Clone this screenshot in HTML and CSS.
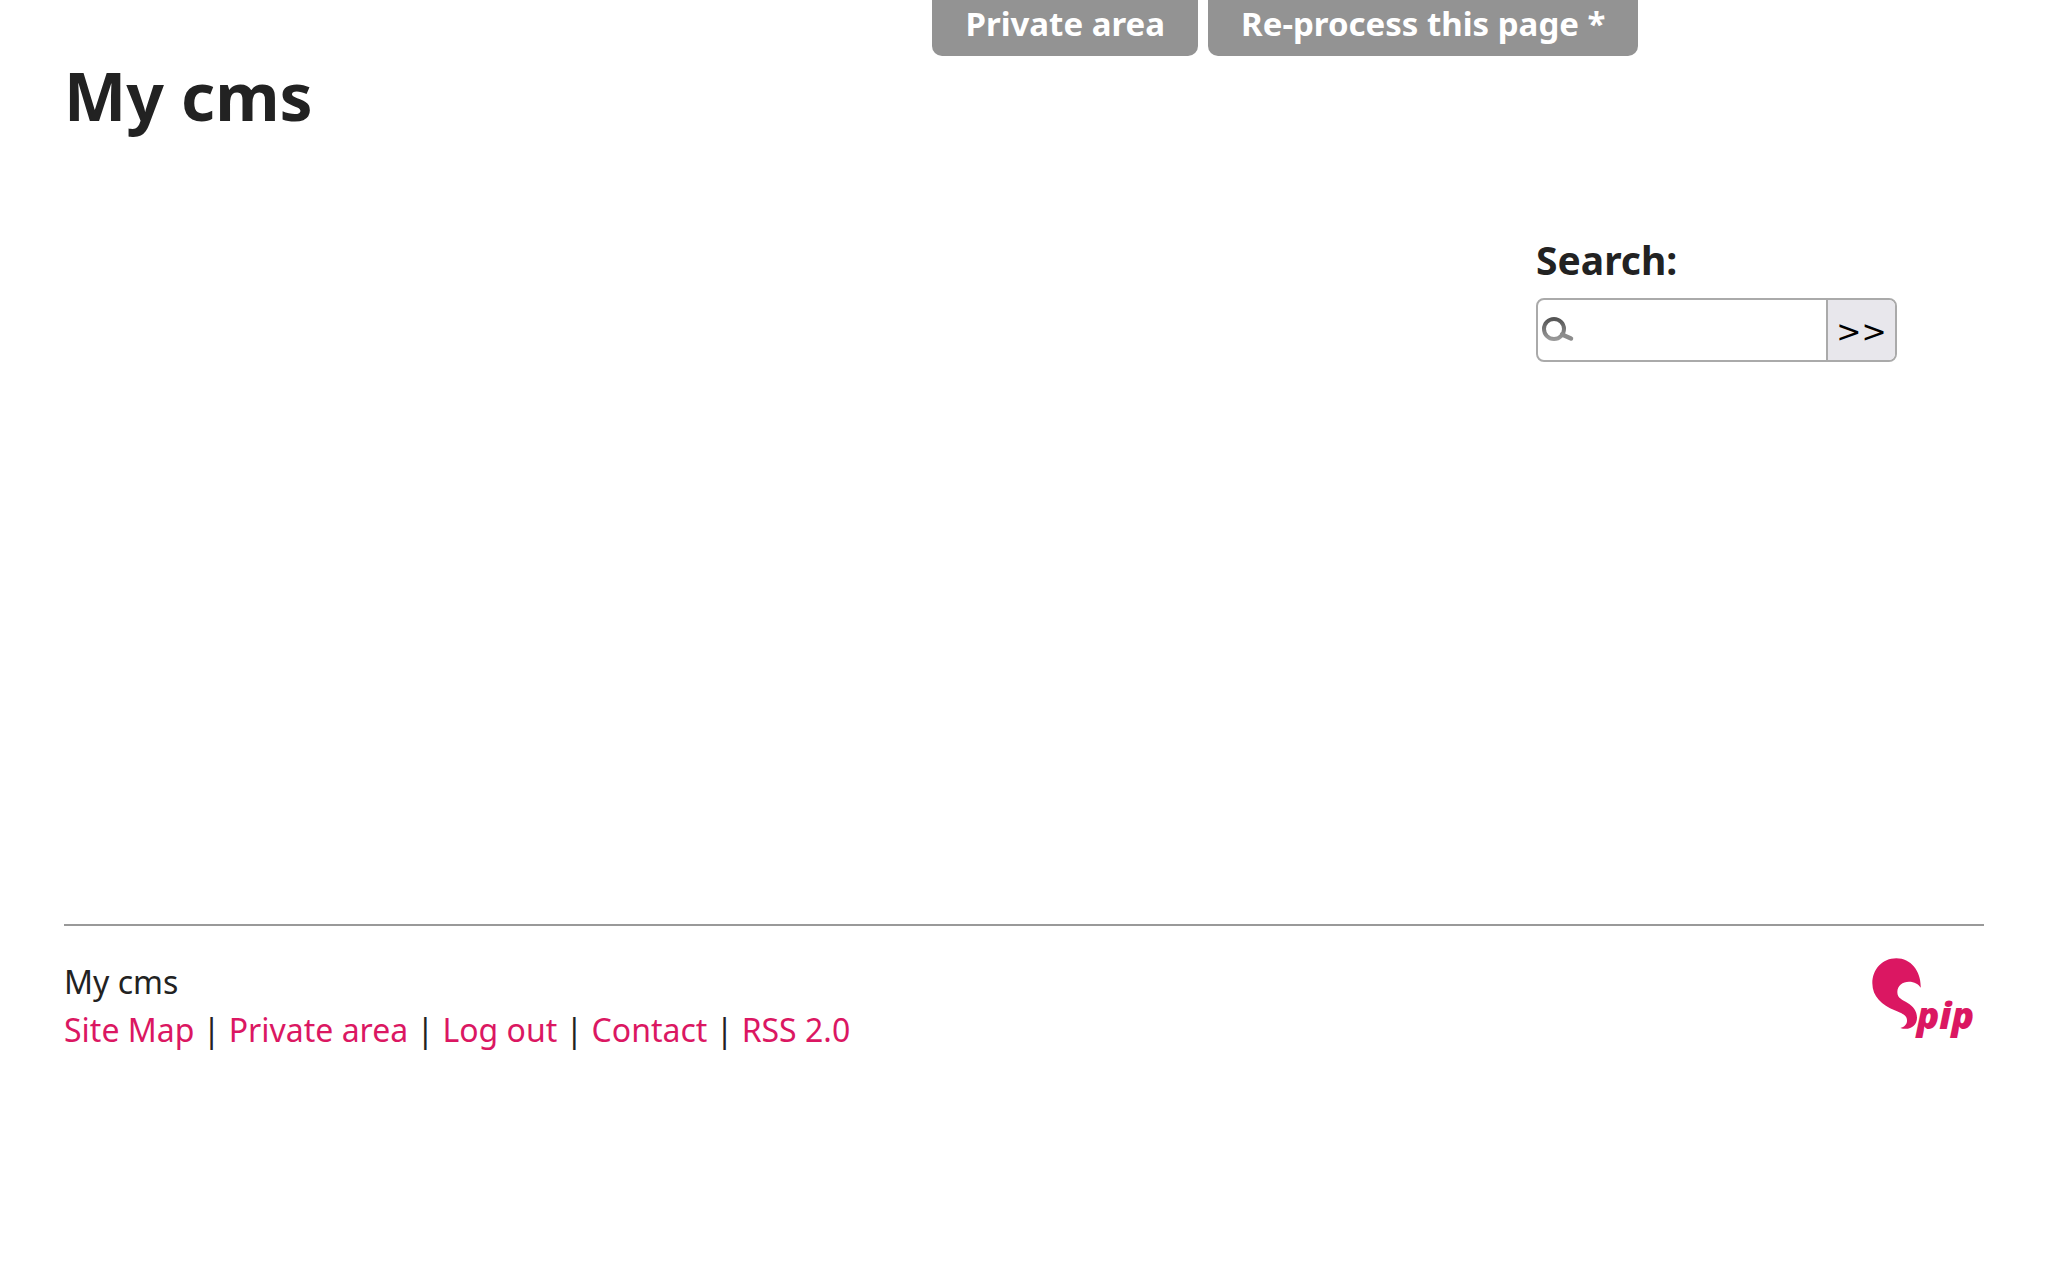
FILE: index.html
```
<!DOCTYPE html>
<html lang="en">
<head>
    <meta charset="UTF-8">
    <meta name="viewport" content="width=device-width, initial-scale=1.0">
    <title>My cms</title>
    <link rel="stylesheet" href="styles.css">
</head>
<body>
    <!-- Admin buttons, over the top of the page -->
    <div class="admin-buttons">
        <a href="#private">Private area</a>
        <a href="#recalcul">Re-process this page *</a>
    </div>

    <div class="page">
        <header class="header">
            <h1>My cms</h1>
        </header>

        <div class="main">
            <main class="content"></main>
            <aside class="aside">
                <form class="search-form">
                    <label for="search">Search:</label>
                    <div class="search-box">
                        <svg class="search-icon" viewBox="0 0 32 26" aria-hidden="true">
                            <defs>
                                <linearGradient id="lens" x1="0" y1="0" x2="0" y2="1">
                                    <stop offset="0" stop-color="#555"/>
                                    <stop offset="1" stop-color="#999"/>
                                </linearGradient>
                            </defs>
                            <circle cx="12" cy="12" r="10" fill="none" stroke="url(#lens)" stroke-width="4"/>
                            <path d="M20 17.500L29 21.500" fill="none" stroke="#8c8c8c" stroke-width="4.500" stroke-linecap="round"/>
                        </svg>
                        <input type="search" id="search" name="recherche">
                        <button type="submit">&gt;&gt;</button>
                    </div>
                </form>
            </aside>
        </div>

        <footer class="footer">
            <div class="colophon">
                <p>My cms</p>
                <p><a href="#plan">Site Map</a> | <a href="#private">Private area</a> | <a href="#logout">Log out</a> | <a href="#contact">Contact</a> | <a href="#rss">RSS 2.0</a></p>
            </div>
            <a class="generator" href="#spip" aria-label="SPIP">
                <svg viewBox="30 51 324 255">
                    <path d="M182 143C184 96 154 55 109 55C67 55 37 88 37 130C37 170 66 196 104 211C128 221 140 226 141 240C142 252 134 260 121 264C149 273 171 257 171 233C171 213 159 199 143 189C127 179 112 175 112 156C112 137 128 125 147 125C163 125 176 132 182 143Z"/>
                    <text x="170" y="268">pip</text>
                </svg>
            </a>
        </footer>
    </div>
</body>
</html>
```
FILE: styles.css
```
/* Base styles */
* {
    box-sizing: border-box;
}
body {
    margin: 0;
    background-color: #fff;
    color: #222;
    font-family: "Lucida Grande", "Noto Sans", sans-serif;
    font-size: 32px;
    line-height: 48px;
}
a {
    color: #db1762;
    text-decoration: none;
}
h1, p {
    margin: 0;
}
.page {
    padding: 48px 64px;
}

/* Admin buttons */
.admin-buttons {
    position: absolute;
    top: 0;
    right: 20%;
    display: flex;
    gap: 10px;
}
.admin-buttons a {
    padding: 0 33px 8px;
    border-radius: 0 0 10px 10px;
    background-color: #939393;
    color: #fff;
    font-size: 33px;
    font-weight: bold;
}

/* Header */
.header {
    min-height: 184px;
}
.header h1 {
    font-size: 66px;
    line-height: 94px;
}

/* Main */
.main {
    display: flex;
    min-height: 692px;
}
.content {
    flex: 1;
}
.aside {
    width: 448px;
}
.search-form label {
    display: block;
    margin-bottom: 10px;
    font-size: 39px;
    font-weight: bold;
    line-height: 56px;
}
.search-box {
    position: relative;
    display: flex;
    width: 361px;
    height: 64px;
    border: 2px solid #aaa;
    border-radius: 8px;
    overflow: hidden;
}
.search-box input {
    flex: 1;
    min-width: 0;
    padding: 0 8px 0 40px;
    border: 0;
    background: none;
    font: inherit;
    color: #222;
}
.search-box button {
    width: 69px;
    padding: 2px 0 0;
    border: 0;
    border-left: 2px solid #aaa;
    background-color: #e8e7ec;
    color: #000;
    font-family: "DejaVu Sans", sans-serif;
    font-size: 30px;
}
.search-icon {
    position: absolute;
    top: 17px;
    left: 4px;
    width: 32px;
    height: 26px;
}

/* Footer */
.footer {
    display: flex;
    justify-content: space-between;
    padding: 31px 6px 0 0;
    border-top: 2px solid #999;
}
.colophon {
    padding-top: 1px;
}
.generator svg {
    display: block;
    width: 108px;
    height: 85px;
    fill: #db1762;
}
.generator text {
    font-family: "Open Sans", sans-serif;
    font-size: 112px;
    font-style: italic;
    font-weight: 800;
}
```
